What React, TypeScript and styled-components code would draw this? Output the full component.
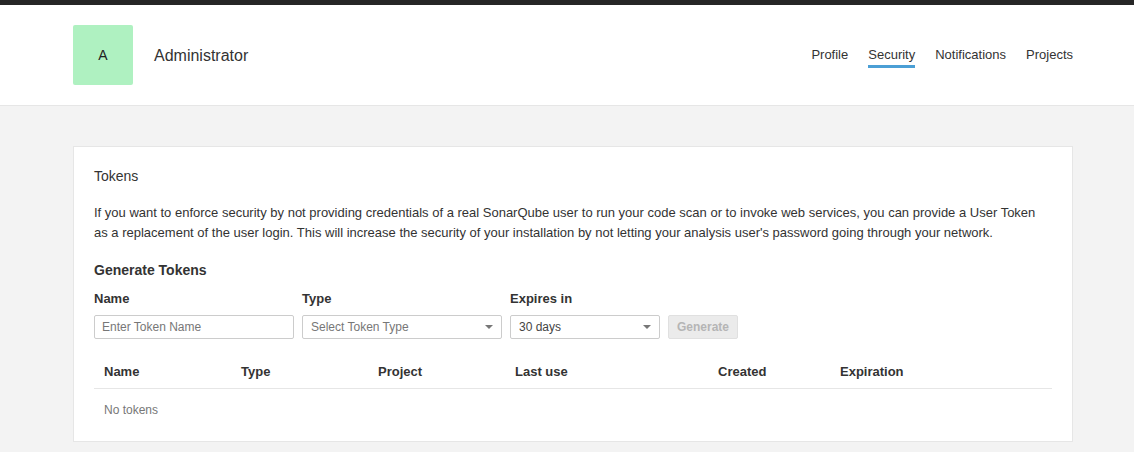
import styled, { createGlobalStyle } from "styled-components";

const GlobalStyle = createGlobalStyle`
  html, body {
    margin: 0;
    padding: 0;
    background: #f3f3f3;
    font-family: "Liberation Sans", Arial, Helvetica, sans-serif;
    font-size: 13px;
    color: #333;
  }
  * {
    box-sizing: border-box;
  }
`;

// Тёмная полоса сверху
const TopBar = styled.div`
  height: 5px;
  background: #262626;
`;

// Шапка пользователя
const Header = styled.header`
  background: #fff;
  border-bottom: 1px solid #e6e6e6;
  padding: 20px 0;
`;

const Inner = styled.div`
  width: 1000px;
  margin-left: 73px;
`;

const HeaderRow = styled(Inner)`
  display: flex;
  align-items: center;
  justify-content: space-between;
  height: 60px;
`;

const UserBlock = styled.div`
  display: flex;
  align-items: center;
  gap: 21px;
`;

const Avatar = styled.div<{ $bg: string }>`
  width: 60px;
  height: 60px;
  border-radius: 2px;
  background: ${(p) => p.$bg};
  display: flex;
  align-items: center;
  justify-content: center;
  font-size: 14px;
  color: #222;
`;

const UserName = styled.h1`
  margin: 2px 0 0;
  font-size: 16px;
  font-weight: 400;
  color: #333;
`;

const Nav = styled.nav`
  display: flex;
  gap: 20px;
`;

const NavLink = styled.a<{ $active?: boolean }>`
  display: block;
  padding: 5px 0 2px;
  line-height: 16px;
  font-size: 13px;
  color: #333;
  text-decoration: none;
  border-bottom: 3px solid ${(p) => (p.$active ? "#4b9fd5" : "transparent")};
  cursor: pointer;
`;

// Основная карточка
const Page = styled(Inner)`
  padding-top: 40px;
`;

const Card = styled.section`
  background: #fff;
  border: 1px solid #e6e6e6;
  padding: 20px 20px 10px;
`;

const CardTitle = styled.h2`
  margin: 0 0 18px;
  font-size: 14px;
  line-height: 18px;
  font-weight: 400;
`;

const Description = styled.p`
  margin: 0 0 19px;
  line-height: 19.5px;
`;

const SubTitle = styled.h3`
  margin: 0 0 12px;
  font-size: 14px;
  line-height: 18px;
  font-weight: 700;
`;

const Form = styled.form`
  display: flex;
  align-items: flex-end;
  gap: 8px;
`;

const Field = styled.div`
  display: flex;
  flex-direction: column;
  gap: 8px;
`;

const Label = styled.label`
  font-weight: 700;
  line-height: 16px;
`;

const Input = styled.input`
  width: 200px;
  height: 24px;
  padding: 0 7px;
  border: 1px solid #ccc;
  border-radius: 2px;
  font-family: inherit;
  font-size: 12px;
  color: #444;
  outline: none;

  &::placeholder {
    color: #777;
  }
`;

const Select = styled.div<{ $width: number; $placeholder?: boolean }>`
  position: relative;
  width: ${(p) => p.$width}px;
  height: 24px;
  padding: 0 8px;
  border: 1px solid #ccc;
  border-radius: 2px;
  font-size: 12px;
  line-height: 22px;
  color: ${(p) => (p.$placeholder ? "#777" : "#444")};

  &::after {
    content: "";
    position: absolute;
    right: 8px;
    top: 9px;
    border-left: 4px solid transparent;
    border-right: 4px solid transparent;
    border-top: 4px solid #777;
  }
`;

const Button = styled.button`
  width: 70px;
  height: 24px;
  padding: 0;
  border: 1px solid #e0e0e0;
  border-radius: 2px;
  background: #ebebeb;
  color: #b5b5b5;
  font-family: inherit;
  font-size: 12px;
  font-weight: 700;
  cursor: not-allowed;
`;

// Таблица токенов
const cols = "137px 137px 137px 203px 122px 1fr";

const Table = styled.div`
  margin-top: 19px;
`;

const HeadRow = styled.div`
  display: grid;
  grid-template-columns: ${cols};
  border-bottom: 1px solid #e6e6e6;
`;

const HeadCell = styled.div`
  padding: 6px 10px 8px;
  line-height: 16px;
  font-weight: 700;
`;

const EmptyRow = styled.div`
  padding: 12px 10px;
  line-height: 18px;
  font-size: 12px;
  color: #777;
`;

const columns = ["Name", "Type", "Project", "Last use", "Created", "Expiration"];
const navItems = ["Profile", "Security", "Notifications", "Projects"];

function App() {
  return (
    <>
      <GlobalStyle />
      <TopBar />
      <Header>
        <HeaderRow>
          <UserBlock>
            <Avatar $bg="#aff1c1">A</Avatar>
            <UserName>Administrator</UserName>
          </UserBlock>
          <Nav>
            {navItems.map((item) => (
              <NavLink key={item} $active={item === "Security"}>
                {item}
              </NavLink>
            ))}
          </Nav>
        </HeaderRow>
      </Header>

      <Page>
        <Card>
          <CardTitle>Tokens</CardTitle>
          <Description>
            If you want to enforce security by not providing credentials of a real SonarQube user to
            run your code scan or to invoke web services, you can provide a User Token as a
            replacement of the user login. This will increase the security of your installation by
            not letting your analysis user's password going through your network.
          </Description>

          <SubTitle>Generate Tokens</SubTitle>
          <Form onSubmit={(e) => e.preventDefault()}>
            <Field>
              <Label>Name</Label>
              <Input placeholder="Enter Token Name" />
            </Field>
            <Field>
              <Label>Type</Label>
              <Select $width={200} $placeholder>
                Select Token Type
              </Select>
            </Field>
            <Field>
              <Label>Expires in</Label>
              <Select $width={150}>30 days</Select>
            </Field>
            <Button type="submit" disabled>
              Generate
            </Button>
          </Form>

          <Table>
            <HeadRow>
              {columns.map((c) => (
                <HeadCell key={c}>{c}</HeadCell>
              ))}
            </HeadRow>
            <EmptyRow>No tokens</EmptyRow>
          </Table>
        </Card>
      </Page>
    </>
  );
}

export default App;
